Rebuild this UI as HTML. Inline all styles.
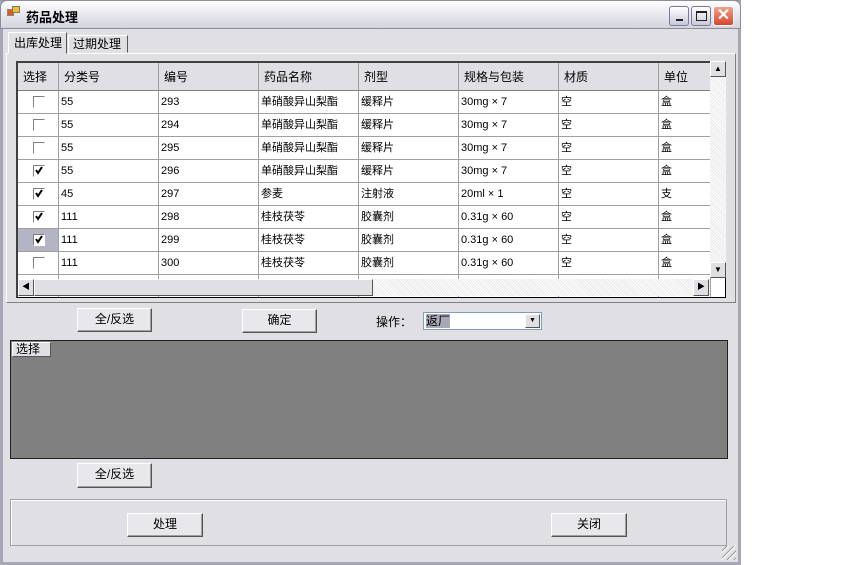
<!DOCTYPE html>
<html><head><meta charset="utf-8"><style>
*{box-sizing:border-box;margin:0;padding:0}
body{width:860px;height:565px;background:#fff;position:relative;overflow:hidden;font-family:"Liberation Sans","Noto Sans CJK SC",sans-serif;font-size:12px;color:#000}
.a{position:absolute}
.win{left:0;top:0;width:741px;height:565px;background:#e0dfe3;border:1px solid #8c8c9c;border-right:3px solid #a7a6b6;border-left:3px solid #a7a6b6;border-bottom:3px solid #a7a6b6}
.title{left:0;top:0;width:741px;height:29px;background:linear-gradient(#fefefe,#ececf2 40%,#d4d4de);border-radius:7px 7px 0 0;border:1px solid #8c8c9c}
.btn{background:#e8e8ec;border:1px solid;border-color:#fff #555 #555 #fff;box-shadow:inset -1px -1px 0 #a0a0a0;text-align:center;line-height:21px;font-size:12px}
.cell{position:absolute;height:23px;line-height:23px;border-right:1px solid #a0a0a0;border-bottom:1px solid #a0a0a0;padding-left:2px;font-size:11px;white-space:nowrap;overflow:hidden;background:#fff}
.hd{position:absolute;height:28px;line-height:28px;padding-left:5px;background:#e0dfe3;border-right:1px solid #a0a0a0;border-bottom:1px solid #808080;font-size:12px}
.cb{position:absolute;left:15px;top:5px;width:12px;height:12px;border:1px solid;border-color:#808080 #fff #fff #808080;background:#fff}
.hatch{background:repeating-linear-gradient(45deg,#e8e8e8 0 1px,#fff 1px 2px)}
.sb{background:#e0dfe3;border:1px solid;border-color:#fff #555 #555 #fff;font-size:8px;text-align:center}
</style></head><body>
<div class="a win"></div>
<div class="a title"></div>
<div class="a" style="left:7px;top:9px;width:7px;height:7px;background:#e05a1a;border:1px solid #888"></div>
<div class="a" style="left:12px;top:6px;width:8px;height:7px;background:#f0c020;border:1px solid #777"></div>
<div class="a" style="left:26px;top:7px;font-size:13px;font-weight:bold">药品处理</div>
<div class="a" style="left:669px;top:6px;width:20px;height:20px;border-radius:3px;background:linear-gradient(#fff,#c8c8d8);border:1px solid #7a7a9a"><div class="a" style="left:6px;top:12px;width:7px;height:2px;background:#222"></div></div>
<div class="a" style="left:691px;top:6px;width:20px;height:20px;border-radius:3px;background:linear-gradient(#fff,#c8c8d8);border:1px solid #7a7a9a"><div class="a" style="left:4px;top:4px;width:11px;height:10px;border:1px solid #222;border-top-width:2px"></div></div>
<div class="a" style="left:713px;top:6px;width:21px;height:20px;border-radius:3px;background:linear-gradient(#f4a090,#d8462a);border:1px solid #fff;color:#fff;font-size:16px;line-height:18px;text-align:center;font-weight:bold">✕</div>
<!-- tabs -->
<div class="a" style="left:6px;top:53px;width:730px;height:250px;border:1px solid;border-color:#fff #808080 #808080 #fff"></div>
<div class="a" style="left:8px;top:32px;width:59px;height:22px;background:#e0dfe3;border:1px solid;border-color:#fff #555 #e0dfe3 #fff;line-height:20px;padding-left:5px">出库处理</div>
<div class="a" style="left:68px;top:35px;width:60px;height:18px;border:1px solid;border-color:#fff #555 transparent #fff;line-height:16px;padding-left:4px">过期处理</div>
<!-- grid -->
<div class="a" style="left:16px;top:61px;width:710px;height:237px;border:1px solid #000;border-left:2px solid #404040;border-top:2px solid #404040;background:#fff;overflow:hidden">
<div class="hd" style="left:0;top:0;width:41px">选择</div>
<div class="hd" style="left:41px;top:0;width:100px">分类号</div>
<div class="hd" style="left:141px;top:0;width:100px">编号</div>
<div class="hd" style="left:241px;top:0;width:100px">药品名称</div>
<div class="hd" style="left:341px;top:0;width:100px">剂型</div>
<div class="hd" style="left:441px;top:0;width:100px">规格与包装</div>
<div class="hd" style="left:541px;top:0;width:100px">材质</div>
<div class="hd" style="left:641px;top:0;width:52px">单位</div>
<div id="rows"></div>
</div>
<div class="a sb" style="left:710px;top:61px;width:16px;height:16px;line-height:13px">▲</div>
<div class="a hatch" style="left:710px;top:77px;width:16px;height:186px"></div>
<div class="a sb" style="left:710px;top:262px;width:16px;height:16px;line-height:13px">▼</div>
<div class="a hatch" style="left:18px;top:279px;width:692px;height:17px"></div>
<div class="a sb" style="left:18px;top:279px;width:16px;height:17px;line-height:14px">◀</div>
<div class="a sb" style="left:34px;top:279px;width:339px;height:17px"></div>
<div class="a sb" style="left:693px;top:279px;width:16px;height:17px;line-height:14px">▶</div>
<!-- controls -->
<div class="a btn" style="left:77px;top:308px;width:75px;height:24px">全/反选</div>
<div class="a btn" style="left:242px;top:309px;width:75px;height:24px">确定</div>
<div class="a" style="left:376px;top:313px">操作：</div>
<div class="a" style="left:423px;top:312px;width:119px;height:18px;background:#fff;border:1px solid #7f9db9"><span style="background:#a8a8b8;position:absolute;left:2px;top:1px;line-height:14px">返厂</span>
<div class="a sb" style="right:1px;top:1px;width:15px;height:14px;line-height:12px;font-size:7px">▼</div></div>
<div class="a" style="left:10px;top:340px;width:718px;height:119px;background:#808080;border:1px solid #202020"></div>
<div class="a" style="left:12px;top:342px;width:39px;height:15px;background:#e0dfe3;border:1px solid;border-color:#fff #555 #555 #fff;line-height:13px;padding-left:3px">选择</div>
<div class="a btn" style="left:77px;top:463px;width:75px;height:25px">全/反选</div>
<div class="a" style="left:10px;top:499px;width:717px;height:47px;border:1px solid #a0a0a8;box-shadow:1px 1px 0 #fff inset"></div>
<div class="a btn" style="left:127px;top:513px;width:76px;height:24px">处理</div>
<div class="a btn" style="left:551px;top:513px;width:76px;height:24px">关闭</div>
<div class="a" style="left:722px;top:546px;width:14px;height:14px;background:repeating-linear-gradient(135deg,transparent 0 3px,#999 3px 4px,#fff 4px 5px)"></div>
<script>
var d=[[0,'55','293','单硝酸异山梨酯','缓释片','30mg × 7','空','盒'],[0,'55','294','单硝酸异山梨酯','缓释片','30mg × 7','空','盒'],[0,'55','295','单硝酸异山梨酯','缓释片','30mg × 7','空','盒'],[1,'55','296','单硝酸异山梨酯','缓释片','30mg × 7','空','盒'],[1,'45','297','参麦','注射液','20ml × 1','空','支'],[1,'111','298','桂枝茯苓','胶囊剂','0.31g × 60','空','盒'],[2,'111','299','桂枝茯苓','胶囊剂','0.31g × 60','空','盒'],[0,'111','300','桂枝茯苓','胶囊剂','0.31g × 60','空','盒'],[0,'','','','','','','']];
var L=[0,41,141,241,341,441,541,641],W=[41,100,100,100,100,100,100,52],h='';
var chk='<svg width="10" height="10" style="position:absolute;left:0;top:0"><path d="M2 4 L4 7 L8 1" stroke="#000" stroke-width="2" fill="none"/></svg>';
d.forEach(function(r,i){var t=28+i*23;
for(var c=0;c<8;c++){var bg=(c==0&&r[0]==2)?'#b4b4c4':'#fff';
if(c==0)h+='<div class="cell" style="left:0;top:'+t+'px;width:41px;background:'+bg+'"><div class="cb">'+(r[0]?chk:'')+'</div></div>';
else h+='<div class="cell" style="left:'+L[c]+'px;top:'+t+'px;width:'+W[c]+'px">'+r[c]+'</div>';}});
document.getElementById('rows').innerHTML=h;
</script>
</body></html>
